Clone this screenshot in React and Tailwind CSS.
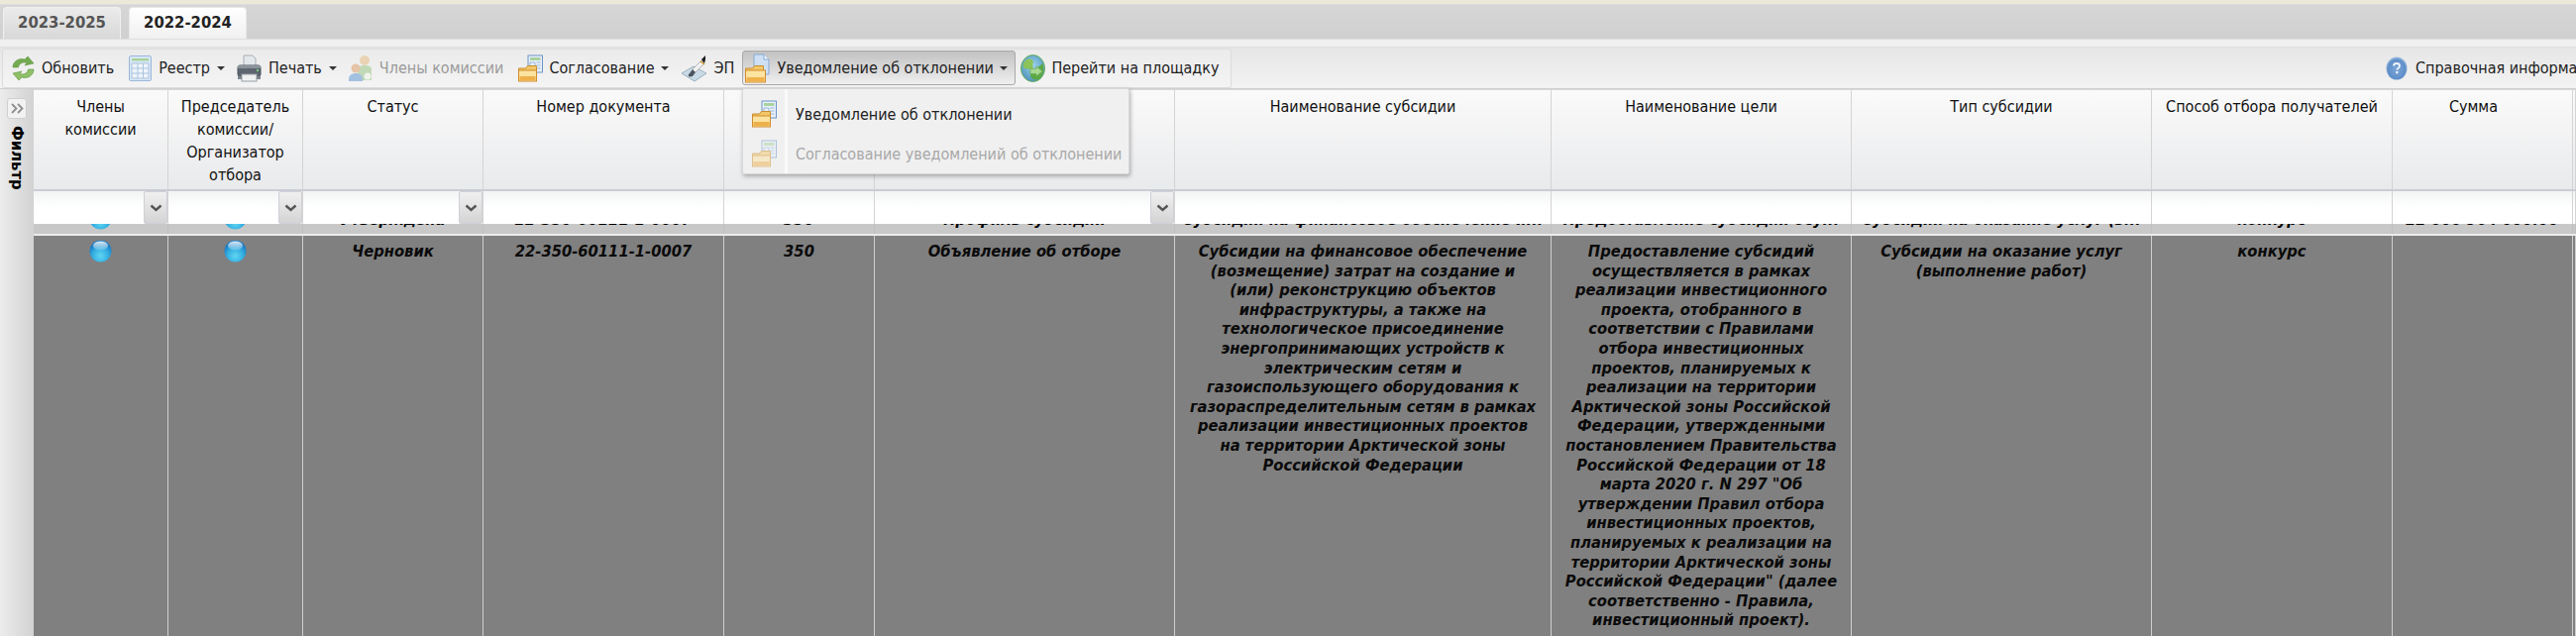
const F = "font-['DejaVu_Sans_Condensed','Liberation_Sans',sans-serif]";
const cols = [
  { w: "w-[136px]", hp: "px-[12px]", rp: "px-[8px]", h: "Члены комиссии", part: "orb", row: "orb", dd: true },
  { w: "w-[136px]", hp: "px-[12px]", rp: "px-[8px]", h: "Председатель комиссии/ Организатор отбора", part: "orb", row: "orb", dd: true },
  { w: "w-[182px]", hp: "px-[12px]", rp: "px-[8px]", h: "Статус", part: "Утверждена", row: "Черновик", dd: true },
  { w: "w-[243px]", hp: "px-[12px]", rp: "px-[8px]", h: "Номер документа", part: "22-350-60111-1-0007", row: "22-350-60111-1-0007" },
  { w: "w-[152px]", hp: "px-[12px]", rp: "px-[8px]", h: "Номер объявления", part: "350", row: "350" },
  { w: "w-[303px]", hp: "px-[12px]", rp: "px-[8px]", h: "Тип документа", part: "Профиль субсидии", row: "Объявление об отборе", dd: true },
  { w: "w-[380px]", hp: "px-[12px]", rp: "px-[12px]", h: "Наименование субсидии", part: "Субсидии на финансовое обеспечение и...", row: "Субсидии на финансовое обеспечение (возмещение) затрат на создание и (или) реконструкцию объектов инфраструктуры, а также на технологическое присоединение энергопринимающих устройств к электрическим сетям и газоиспользующего оборудования к газораспределительным сетям в рамках реализации инвестиционных проектов на территории Арктической зоны Российской Федерации" },
  { w: "w-[303px]", hp: "px-[12px]", rp: "px-[8px]", h: "Наименование цели", part: "Предоставление субсидий осу...", row: "Предоставление субсидий осуществляется в рамках реализации инвестиционного проекта, отобранного в соответствии с Правилами отбора инвестиционных проектов, планируемых к реализации на территории Арктической зоны Российской Федерации, утвержденными постановлением Правительства Российской Федерации от 18 марта 2020 г. N 297 \"Об утверждении Правил отбора инвестиционных проектов, планируемых к реализации на территории Арктической зоны Российской Федерации\" (далее соответственно - Правила, инвестиционный проект)." },
  { w: "w-[303px]", hp: "px-[12px]", rp: "px-[8px]", h: "Тип субсидии", part: "Субсидии на оказание услуг (в...", row: "Субсидии на оказание услуг (выполнение работ)" },
  { w: "w-[243px]", hp: "px-[12px]", rp: "px-[8px]", h: "Способ отбора получателей", part: "конкурс", row: "конкурс" },
  { w: "w-[182px]", hp: "pl-[8px] pr-[26px]", rp: "px-[8px]", h: "Сумма", part: "22 000 964 000.00", row: "" },
  { w: "w-[3px]", hp: "px-0", rp: "px-0", h: "", part: "", row: "" },
];

function Orb() {
  return (
    <svg width="23" height="23" viewBox="0 0 23 23" className="block">
      <defs>
        <radialGradient id="orbg" cx="50%" cy="72%" r="60%">
          <stop offset="0%" stopColor="#5fd6f2" />
          <stop offset="60%" stopColor="#35aee2" />
          <stop offset="100%" stopColor="#1a7cc4" />
        </radialGradient>
        <linearGradient id="orbh" x1="0" y1="0" x2="0" y2="1">
          <stop offset="0%" stopColor="#ffffff" stopOpacity="0.85" />
          <stop offset="100%" stopColor="#ffffff" stopOpacity="0.15" />
        </linearGradient>
      </defs>
      <circle cx="11.5" cy="11.5" r="11" fill="url(#orbg)" />
      <ellipse cx="11.5" cy="6" rx="7.5" ry="4.6" fill="url(#orbh)" />
    </svg>
  );
}

function Refresh() {
  return (
    <svg width="25" height="26" viewBox="0 0 25 26">
      <path d="M2 12 C2 6 8 2 14 4 L17 1 L23 8 L14 10 L16 7.5 C11 6 8 9 7.5 12 Z" fill="#73ab52" stroke="#5a9440" strokeWidth="0.6" />
      <path d="M23 14 C23 20 17 24 11 22 L8 25 L2 18 L11 16 L9 18.5 C14 20 17 17 17.5 14 Z" fill="#8fc068" stroke="#5a9440" strokeWidth="0.6" />
    </svg>
  );
}
function Table() {
  return (
    <svg width="23" height="26" viewBox="0 0 23 26">
      <rect x="0.5" y="0.5" width="22" height="25" rx="1.5" fill="#d8e6f6" stroke="#9ab8da" />
      <rect x="3" y="3" width="17" height="2.5" fill="#a9d49a" />
      <path d="M3 8h17v15H3z" fill="#eef4fa" stroke="#a9c3de" />
      <path d="M3 13h17M3 18h17M9 8v15M14.5 8v15" stroke="#a9c3de" fill="none" />
    </svg>
  );
}
function Printer() {
  return (
    <svg width="25" height="28" viewBox="0 0 25 28">
      <path d="M7 1h9l3 3v8H7z" fill="#e4e8ea" stroke="#a5adb5" />
      <rect x="1" y="11" width="23" height="11" rx="2" fill="#5d6670" stroke="#4d545c" />
      <rect x="1" y="11" width="23" height="3" fill="#8b939b" />
      <rect x="20" y="15" width="2" height="2" fill="#74d17a" />
      <rect x="5" y="20" width="15" height="7" fill="#eef0f1" stroke="#98a0a6" />
      <rect x="1" y="22" width="4" height="3" fill="#7d858d" />
      <rect x="20" y="22" width="4" height="3" fill="#7d858d" />
    </svg>
  );
}
function People() {
  return (
    <svg width="25" height="28" viewBox="0 0 25 28" className="opacity-60">
      <circle cx="16" cy="6" r="5" fill="#e9c28d" />
      <path d="M9 15c0-3 3-4 7-4s7 1 7 4v11H9z" fill="#a3cb90" />
      <circle cx="7" cy="14" r="4.5" fill="#e0a878" />
      <path d="M0 25c0-4 3-6 7-6s7 2 7 6v2H0z" fill="#6fa0d6" />
      <circle cx="19" cy="22" r="3.5" fill="#eef5ea" />
    </svg>
  );
}
function FolderDoc({ cls = "" }) {
  return (
    <svg width="25" height="28" viewBox="0 0 25 28" className={cls}>
      <rect x="10" y="1" width="14.5" height="17" fill="#e8f0fa" stroke="#6d94c7" />
      <rect x="12" y="3" width="10.5" height="3" fill="#a8d2a0" />
      <path d="M12 8h5v6h-5zM18.5 8h4M18.5 11h4M18.5 14h4" stroke="#9ab6d8" fill="none" />
      <path d="M0.5 14h7l2-2.5h9V17H0.5z" fill="#f2c769" stroke="#c98e2f" />
      <rect x="0.5" y="16" width="18" height="11" fill="#fbe29f" stroke="#d18c2a" />
      <rect x="1.5" y="22" width="16" height="4" fill="#eeb04a" />
    </svg>
  );
}
function FolderPage() {
  return (
    <svg width="25" height="30" viewBox="0 0 25 30">
      <path d="M9 1h10l5 5v15H9z" fill="#cfe0f5" stroke="#88a9d3" />
      <path d="M19 1v5h5" fill="#f2f7fc" stroke="#88a9d3" />
      <path d="M0.5 15h7l2-2.5h9V18H0.5z" fill="#f2c769" stroke="#c98e2f" />
      <rect x="0.5" y="17" width="20" height="12" fill="#fde3a0" stroke="#d18c2a" />
      <rect x="1.5" y="24" width="18" height="4" fill="#f0b14a" />
    </svg>
  );
}
function Pen() {
  return (
    <svg width="27" height="28" viewBox="0 0 27 28">
      <path d="M1 19 L13 12 L26 19 L14 27 Z" fill="#c9dbe6" stroke="#9cb0c0" />
      <path d="M9 19 C6 22 9 23 12 22 L15 18 L12 15 Z" fill="#4c5560" />
      <path d="M12 15 L21 6 L24 9 L15 18 Z" fill="#f1f1f1" stroke="#8a8a8a" strokeWidth="0.6" />
      <path d="M21 5 L25 1 L25 5 L24 9 Z" fill="#1c1c1c" />
      <path d="M20 7 l4 3" stroke="#d9962d" strokeWidth="1.4" fill="none" />
    </svg>
  );
}
function Globe() {
  return (
    <svg width="25" height="28" viewBox="0 0 25 28">
      <defs>
        <radialGradient id="gl" cx="50%" cy="40%" r="60%">
          <stop offset="0%" stopColor="#9fd4ea" />
          <stop offset="100%" stopColor="#4e94bd" />
        </radialGradient>
      </defs>
      <ellipse cx="12.5" cy="14" rx="12" ry="13.5" fill="url(#gl)" stroke="#66ad58" strokeWidth="1" />
      <path d="M5 6 C9 3 13 5 13 8 C11 11 14 12 12 15 C9 16 5 13 3 14 C2 11 3 8 5 6 Z" fill="#8cc35a" />
      <path d="M10 18 C13 15 19 13 22 9 C24 13 24 19 20 24 C16 27 11 25 10 22 Z" fill="#5ca845" />
      <path d="M16 12 l6 5 -6 5 v-2.5 h-6 v-5 h6 Z" fill="#a9d893" stroke="#6aa84f" strokeWidth="0.6" />
    </svg>
  );
}
function Help() {
  return (
    <svg width="22" height="24" viewBox="0 0 22 24">
      <defs>
        <radialGradient id="hp" cx="50%" cy="55%" r="60%">
          <stop offset="0%" stopColor="#7ba6d8" />
          <stop offset="70%" stopColor="#5f8fc9" />
          <stop offset="100%" stopColor="#bcd3ea" />
        </radialGradient>
      </defs>
      <ellipse cx="11" cy="12" rx="10.5" ry="11.5" fill="url(#hp)" />
      <path d="M8 9.5c0-1.5 1.2-2.5 3-2.5s3 1 3 2.5c0 2-2.6 2.2-2.6 4" fill="none" stroke="#f2f6fb" strokeWidth="1.8" />
      <rect x="10.2" y="15" width="2.2" height="2.2" fill="#f2f6fb" />
    </svg>
  );
}
function Caret() {
  return <span className="w-0 h-0 border-x-[4px] border-x-transparent border-t-[4px] border-t-[#333] inline-block" />;
}
function Chevron() {
  return (
    <svg width="13" height="8" viewBox="0 0 13 8">
      <path d="M1.5 1.5 L6.5 6 L11.5 1.5" fill="none" stroke="#555" strokeWidth="2.4" />
    </svg>
  );
}
function DoubleChevron() {
  return (
    <svg width="13" height="11" viewBox="0 0 13 11">
      <path d="M1 1 L5.5 5.5 L1 10M7 1 L11.5 5.5 L7 10" fill="none" stroke="#8f8f8f" strokeWidth="1.8" />
    </svg>
  );
}
function TB({ icon, text, caret, dim, cls = "" }) {
  return (
    <div className={"flex items-center h-[35px] " + cls}>
      {icon}
      <span className={"whitespace-nowrap " + (dim ? "text-[#9a9a9a]" : "text-[#222]")}>{text}</span>
      {caret && <span className="ml-[7px] flex"><Caret /></span>}
    </div>
  );
}

export default function App() {
  return (
    <div className={F + " w-[2600px] h-[642px] overflow-hidden relative bg-white text-[16px] text-black"}>
      <div className="h-[4px] bg-[#ece9d8]" />
      <div className="h-[35px] bg-gradient-to-b from-[#d6d6d6] to-[#d0d0d0] flex items-end pl-[3px] gap-[8px] border-t border-[#dcdcdc]">
        <div className="w-[119px] h-[32px] rounded-t-[4px] border border-b-0 border-[#f0f0f0] bg-gradient-to-b from-[#ebebeb] to-[#d8d8d8] flex items-center justify-center font-bold text-[#555] text-[16.5px]">2023-2025</div>
        <div className="w-[119px] h-[32px] rounded-t-[4px] border border-b-0 border-[#e8e8e8] bg-gradient-to-b from-[#ffffff] to-[#f0f0f0] flex items-center justify-center font-bold text-[#222] text-[16.5px]">2022-2024</div>
      </div>
      <div className="h-[9px] bg-[#f0f0f0] border-y border-[#dedede]" />
      <div className="h-[42px] bg-gradient-to-b from-[#e6e6e6] to-[#f3f3f3] flex items-center border-b border-[#cfcfcf] relative">
        <div className="h-[40px] w-[1241px] ml-[2px] shrink-0 bg-gradient-to-b from-[#ebebeb] to-[#f4f4f4] border border-[#dcdcdc] rounded-[2px] flex items-center pl-[8px]">
          <TB icon={<span className="mr-[6px] flex"><Refresh /></span>} text="Обновить" />
          <TB cls="ml-[15px]" icon={<span className="mr-[7px] flex"><Table /></span>} text="Реестр" caret />
          <TB cls="ml-[12px]" icon={<span className="mr-[7px] flex"><Printer /></span>} text="Печать" caret />
          <TB cls="ml-[12px]" icon={<span className="mr-[6px] flex"><People /></span>} text="Члены комиссии" dim />
          <TB cls="ml-[15px]" icon={<span className="mr-[6px] flex"><FolderDoc /></span>} text="Согласование" caret />
          <TB cls="ml-[12px]" icon={<span className="mr-[6px] flex"><Pen /></span>} text="ЭП" />
          <div className="ml-[8px] w-[276px] h-[35px] rounded-[3px] border border-[#a8a8a8] bg-gradient-to-b from-[#c2c2c2] to-[#efefef] flex items-center pl-[2px]">
            <span className="mr-[7px] flex"><FolderPage /></span>
            <span className="whitespace-nowrap text-[#222]">Уведомление об отклонении</span>
            <span className="ml-[6px] flex"><Caret /></span>
          </div>
          <TB cls="ml-[5px]" icon={<span className="mr-[6px] flex"><Globe /></span>} text="Перейти на площадку" />
        </div>
        <div className="ml-[1165px] flex items-center shrink-0 whitespace-nowrap text-[#222]">
          <span className="mr-[8px] flex"><Help /></span>Справочная информация
        </div>
      </div>

      <div className="flex h-[553px]">
        <div className="w-[34px] shrink-0 bg-gradient-to-r from-[#ececec] to-[#d2d2d2] flex flex-col items-center pt-[9px]">
          <div className="w-[20px] h-[21px] rounded-[3px] border border-[#cfcfcf] bg-[#f2f2f2] flex items-center justify-center"><DoubleChevron /></div>
          <div className="mt-[7px] font-bold text-[16.5px] leading-[18px] [writing-mode:vertical-rl]">Фильтр</div>
        </div>
        <div className="flex-1 min-w-0">
          <div className="flex h-[103px] border-t border-[#d8d8d8] border-b-2 border-b-[#c9ccd4]">
            {cols.map((c, i) => (
              <div key={i} className={c.w + " " + c.hp + " shrink-0 border-r border-[#d4d4d4] bg-gradient-to-b from-[#fafafa] to-[#e9eaec] text-center pt-[5px] leading-[23px] text-[#111]"}>{c.h}</div>
            ))}
          </div>
          <div className="flex h-[33px]">
            {cols.map((c, i) => (
              <div key={i} className={c.w + " shrink-0 border-r border-[#d4d4d4] bg-gradient-to-b from-[#f2f4f4] via-[#ffffff] to-[#ffffff] flex justify-end"}>
                {c.dd && <div className="w-[24px] h-full border border-[#cfd0d8] rounded-[2px] bg-gradient-to-b from-[#f0f0f0] to-[#d4d4d4] flex items-center justify-center"><Chevron /></div>}
              </div>
            ))}
          </div>
          <div className="flex h-[10px] overflow-hidden bg-[#c8c8c8] font-bold italic text-[16.4px]">
            {cols.map((c, i) => (
              <div key={i} className={c.w + " shrink-0 border-r border-[#c0c0c0] h-[10px] overflow-hidden"}>
                <div className="-mt-[14px] h-[20px] flex justify-center whitespace-nowrap leading-[20px] overflow-hidden">
                  {c.part === "orb" ? <div className="-mt-[3px]"><Orb /></div> : c.part}
                </div>
              </div>
            ))}
          </div>
          <div className="h-[2px] bg-[#ececec]" />
          <div className="flex h-[404px] bg-[#808080]">
            {cols.map((c, i) => (
              <div key={i} className={c.w + " " + c.rp + " shrink-0 border-r border-[#cfcfcf] text-center pt-[6px] font-bold italic text-[16.4px] leading-[19.6px] text-[#0a0a0a]"}>
                {c.row === "orb" ? <div className="flex justify-center -mt-[2px]"><Orb /></div> : c.row}
              </div>
            ))}
          </div>
        </div>
      </div>

      <div className="absolute left-[749px] top-[89px] w-[391px] h-[87px] bg-[#f0f0f0] border border-[#d8d8d8] rounded-[2px] shadow-[1px_2px_4px_rgba(0,0,0,0.3)] flex">
        <div className="w-[45px] border-r-[3px] border-[#fafafa] flex flex-col items-center pt-[11px] gap-[12px] shrink-0">
          <FolderDoc />
          <FolderDoc cls="opacity-50" />
        </div>
        <div className="pl-[8px] pt-[16px] leading-[20px] whitespace-nowrap">
          <div className="text-[#222]">Уведомление об отклонении</div>
          <div className="mt-[20px] text-[#a8a8a8]">Согласование уведомлений об отклонении</div>
        </div>
      </div>
    </div>
  );
}
